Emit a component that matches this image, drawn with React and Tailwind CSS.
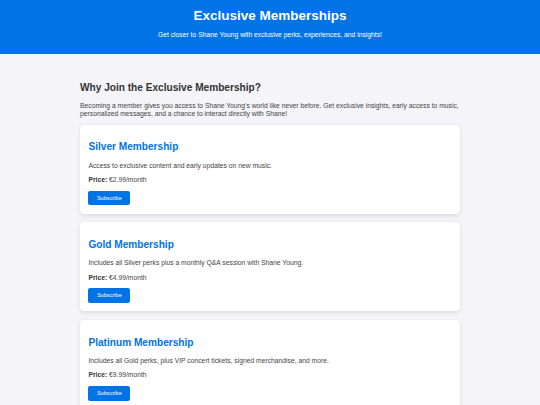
const plans = [
  {
    name: "Silver Membership",
    desc: "Access to exclusive content and early updates on new music.",
    price: "€2.99/month",
  },
  {
    name: "Gold Membership",
    desc: "Includes all Silver perks plus a monthly Q&A session with Shane Young.",
    price: "€4.99/month",
  },
  {
    name: "Platinum Membership",
    desc: "Includes all Gold perks, plus VIP concert tickets, signed merchandise, and more.",
    price: "€9.99/month",
  },
];

function PlanCard({ plan }) {
  return (
    <div className="flex flex-col rounded-[4.2px] bg-white p-[8.44px] shadow-[0_1.5px_4px_rgba(0,0,0,0.1)]">
      <h3 className="mt-[8.4px] text-[10.125px] font-bold leading-[1.15] text-[#0073e6]">
        {plan.name}
      </h3>
      <p className="mt-[8.4px] text-[6.75px] leading-[1.15] text-[#444]">
        {plan.desc}
      </p>
      <p className="mt-[6.75px] text-[6.75px] leading-[1.15] text-[#444]">
        <strong className="text-[#333]">Price:</strong> {plan.price}
      </p>
      <button className="mt-[6.75px] self-start rounded-[2.1px] bg-[#0073e6] px-[8.44px] py-[4.2px] text-[5.625px] leading-[1.15] text-white">
        Subscribe
      </button>
    </div>
  );
}

export default function App() {
  return (
    <div className="min-h-screen bg-[#f4f4f9] font-['Liberation_Sans',Arial,sans-serif]">
      <header className="bg-[#0073e6] pt-[8.44px] pb-[15.2px] text-center text-white">
        <h1 className="text-[13.5px] font-bold leading-[1.15]">
          Exclusive Memberships
        </h1>
        <p className="mt-[6.75px] text-[6.75px] leading-[1.15]">
          Get closer to Shane Young with exclusive perks, experiences, and
          insights!
        </p>
      </header>

      <main className="mx-auto flex max-w-[380px] flex-col pt-[28.3px] pb-[20px]">
        <h2 className="text-[10.125px] font-bold leading-[1.15] text-[#333]">
          Why Join the Exclusive Membership?
        </h2>
        <p className="mt-[8.4px] text-[6.75px] leading-[1.15] text-[#444]">
          Becoming a member gives you access to Shane Young's world like never
          before. Get exclusive insights, early access to music, personalized
          messages, and a chance to interact directly with Shane!
        </p>
        <div className="mt-[7.2px] flex flex-col gap-[8.44px]">
          {plans.map((p) => (
            <PlanCard key={p.name} plan={p} />
          ))}
        </div>
      </main>
    </div>
  );
}
